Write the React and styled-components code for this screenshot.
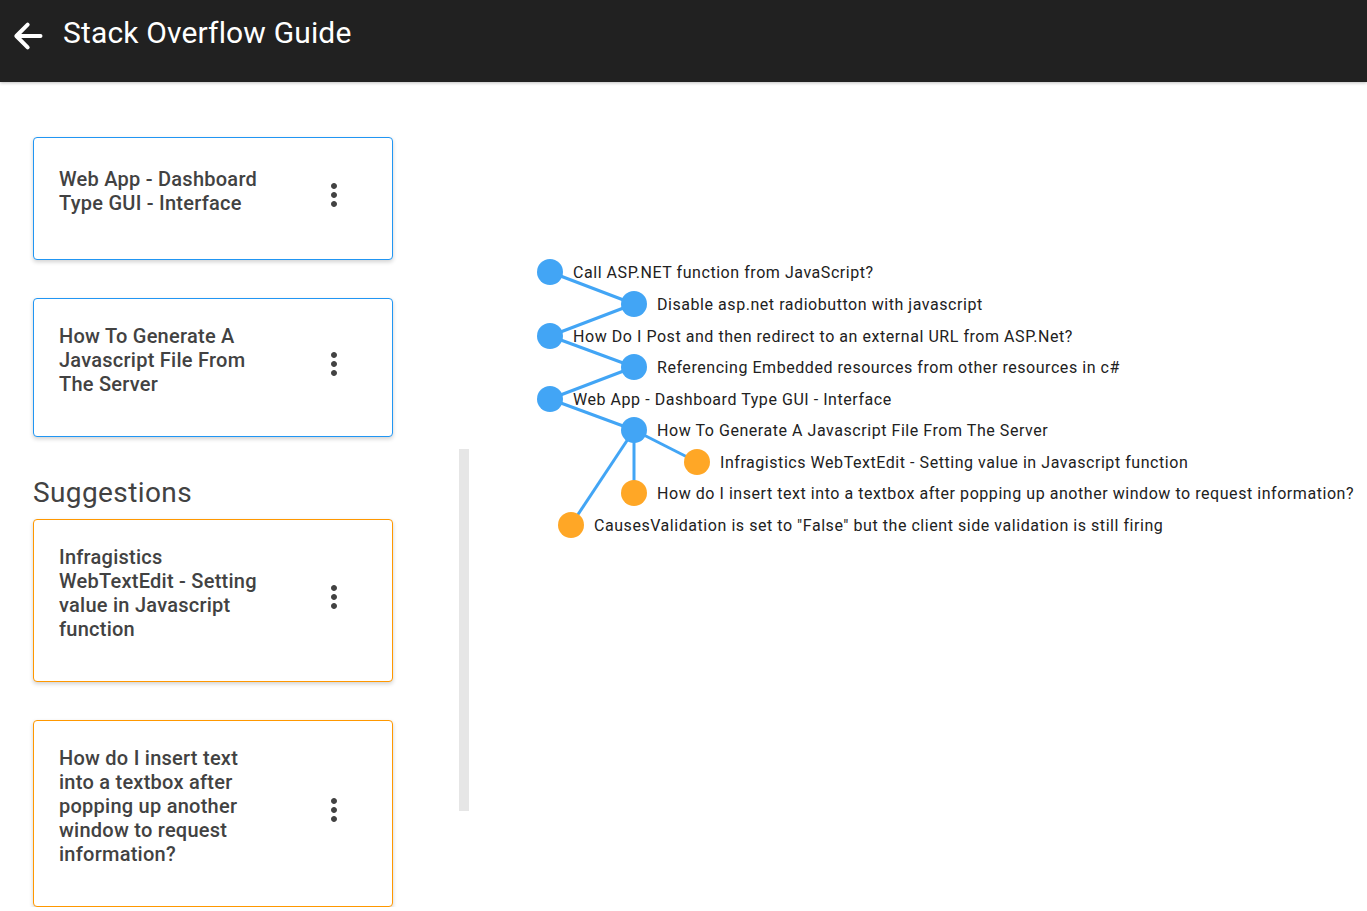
import styled, { createGlobalStyle } from 'styled-components';

const GlobalStyle = createGlobalStyle`
  body {
    margin: 0;
    background: #ffffff;
    font-family: Roboto, "Noto Sans", "Liberation Sans", sans-serif;
  }
`;

const BLUE = '#42a5f5';
const ORANGE = '#ffa726';

const Header = styled.header`
  height: 82px;
  box-sizing: border-box;
  background: #212121;
  display: flex;
  align-items: flex-start;
  padding: 15px 0 0 8px;
  box-shadow: 0 1px 3px rgba(0, 0, 0, 0.25);
  position: relative;
  z-index: 1;
`;

const BackButton = styled.button`
  width: 40px;
  height: 40px;
  margin-top: 1px;
  padding: 0;
  border: none;
  background: none;
  color: #ffffff;
  cursor: pointer;
  display: flex;
`;

const Title = styled.h1`
  margin: 0 0 0 15px;
  font-size: 30px;
  line-height: 36px;
  font-weight: 400;
  letter-spacing: 0.15px;
  color: #ffffff;
`;

const Main = styled.main`
  display: flex;
  align-items: flex-start;
`;

const Sidebar = styled.section`
  width: 360px;
  padding: 55px 0 0 33px;
  display: flex;
  flex-direction: column;
`;

const List = styled.div`
  display: flex;
  flex-direction: column;
  gap: 38px;
`;

const SectionTitle = styled.h2`
  margin: 39px 0 9px;
  font-size: 28px;
  line-height: 34px;
  font-weight: 400;
  letter-spacing: 0.4px;
  color: #424242;
`;

const Card = styled.div`
  box-sizing: border-box;
  min-height: 123px;
  display: grid;
  grid-template-columns: 208px 1fr 36px;
  align-items: center;
  padding: 25px 40px 22px 25px;
  background: #ffffff;
  border: 1px solid ${({ $color }) => ($color === 'orange' ? '#ff9800' : '#2196f3')};
  border-radius: 4px;
  box-shadow: 0 2px 4px rgba(0, 0, 0, 0.18);
`;

const CardTitle = styled.div`
  grid-column: 1;
  font-size: 20px;
  line-height: 24px;
  font-weight: 500;
  letter-spacing: 0.25px;
  color: #424242;
  margin-bottom: 18px;
`;

const Kebab = styled.button`
  grid-column: 3;
  width: 36px;
  height: 36px;
  padding: 0;
  margin-bottom: 10px;
  border: none;
  background: none;
  color: #424242;
  display: flex;
  cursor: pointer;
`;

const ScrollTrack = styled.div`
  width: 10px;
  height: 362px;
  margin: 367px 0 0 66px;
  background: #e6e6e6;
`;

const GraphArea = styled.section`
  flex: 1;
  padding: 168px 0 0 61px;
`;

const Graph = styled.svg`
  display: block;
  overflow: visible;
  font-family: Roboto, "Noto Sans", "Liberation Sans", sans-serif;
  font-size: 16px;
  letter-spacing: 0.55px;
`;

const MoreIcon = () => (
  <svg width="36" height="36" viewBox="0 0 24 24" fill="currentColor">
    <path d="M12 8c1.1 0 2-.9 2-2s-.9-2-2-2-2 .9-2 2 .9 2 2 2zm0 2c-1.1 0-2 .9-2 2s.9 2 2 2 2-.9 2-2-.9-2-2-2zm0 6c-1.1 0-2 .9-2 2s.9 2 2 2 2-.9 2-2-.9-2-2-2z" />
  </svg>
);

const ArrowBack = () => (
  <svg width="40" height="40" viewBox="0 0 24 24" fill="none" stroke="currentColor" strokeWidth="2.4" strokeLinecap="round" strokeLinejoin="round">
    <path d="M19.5 12H5.2M11.8 5.2L5 12l6.8 6.8" />
  </svg>
);

const related = [
  'Web App - Dashboard Type GUI - Interface',
  'How To Generate A Javascript File From The Server',
];

const suggestions = [
  'Infragistics WebTextEdit - Setting value in Javascript function',
  'How do I insert text into a textbox after popping up another window to request information?',
];

const nodes = [
  { x: 20, y: 22, c: BLUE, label: 'Call ASP.NET function from JavaScript?' },
  { x: 104, y: 54, c: BLUE, label: 'Disable asp.net radiobutton with javascript' },
  { x: 20, y: 86, c: BLUE, label: 'How Do I Post and then redirect to an external URL from ASP.Net?' },
  { x: 104, y: 117, c: BLUE, label: 'Referencing Embedded resources from other resources in c#' },
  { x: 20, y: 149, c: BLUE, label: 'Web App - Dashboard Type GUI - Interface' },
  { x: 104, y: 180, c: BLUE, label: 'How To Generate A Javascript File From The Server' },
  { x: 167, y: 212, c: ORANGE, label: 'Infragistics WebTextEdit - Setting value in Javascript function' },
  { x: 104, y: 243, c: ORANGE, label: 'How do I insert text into a textbox after popping up another window to request information?' },
  { x: 41, y: 275, c: ORANGE, label: 'CausesValidation is set to "False" but the client side validation is still firing' },
];

const edges = [
  [0, 1], [1, 2], [2, 3], [3, 4], [4, 5], [5, 6], [5, 7], [5, 8],
];

const QuestionCard = ({ title, color }) => (
  <Card $color={color}>
    <CardTitle>{title}</CardTitle>
    <Kebab type="button" aria-label="more">
      <MoreIcon />
    </Kebab>
  </Card>
);

export default function App() {
  return (
    <>
      <GlobalStyle />
      <Header>
        <BackButton type="button" aria-label="back">
          <ArrowBack />
        </BackButton>
        <Title>Stack Overflow Guide</Title>
      </Header>
      <Main>
        <Sidebar>
          <List>
            {related.map((t) => (
              <QuestionCard key={t} title={t} color="blue" />
            ))}
          </List>
          <SectionTitle>Suggestions</SectionTitle>
          <List>
            {suggestions.map((t) => (
              <QuestionCard key={t} title={t} color="orange" />
            ))}
          </List>
        </Sidebar>
        <ScrollTrack />
        <GraphArea>
          <Graph width="837" height="300">
            {edges.map(([a, b]) => (
              <line
                key={`${a}-${b}`}
                x1={nodes[a].x}
                y1={nodes[a].y}
                x2={nodes[b].x}
                y2={nodes[b].y}
                stroke={BLUE}
                strokeWidth="3"
              />
            ))}
            {nodes.map((n) => (
              <g key={n.label}>
                <circle cx={n.x} cy={n.y} r="13" fill={n.c} />
                <text x={n.x + 23} y={n.y + 6} fill="#212121">
                  {n.label}
                </text>
              </g>
            ))}
          </Graph>
        </GraphArea>
      </Main>
    </>
  );
}
